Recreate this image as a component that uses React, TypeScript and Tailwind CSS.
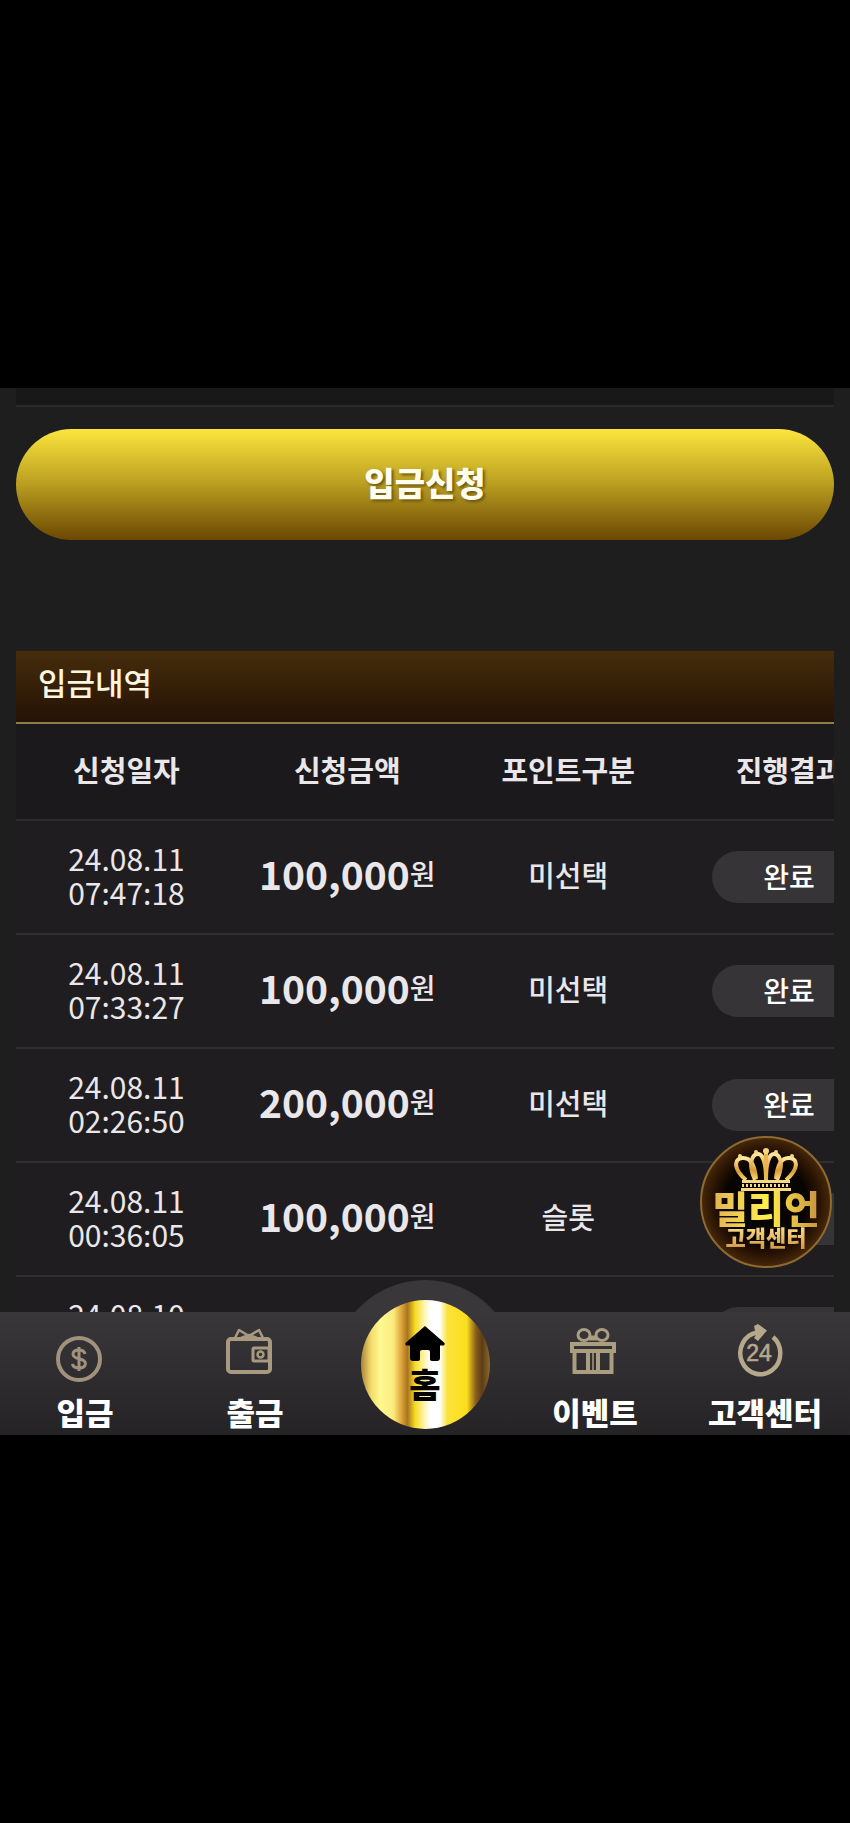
import type { ReactNode } from 'react';

interface Deposit {
  id: number;
  date: string;
  time?: string;
  amount?: string;
  point?: string;
  status?: string;
}

const deposits: Deposit[] = [
  { id: 5, date: '24.08.11', time: '07:47:18', amount: '100,000', point: '미선택', status: '완료' },
  { id: 4, date: '24.08.11', time: '07:33:27', amount: '100,000', point: '미선택', status: '완료' },
  { id: 3, date: '24.08.11', time: '02:26:50', amount: '200,000', point: '미선택', status: '완료' },
  { id: 2, date: '24.08.11', time: '00:36:05', amount: '100,000', point: '슬롯' },
  { id: 1, date: '24.08.10' },
];

const columns = ['신청일자', '신청금액', '포인트구분', '진행결과'];

function CoinIcon() {
  return (
    <svg className="mt-4" width="48" height="48" viewBox="0 0 48 48" fill="none" stroke="#a0927c" aria-hidden="true">
      <circle cx="24" cy="24" r="21" strokeWidth="4" />
      <path
        d="M30 19c-.6-2.600-2.800-3.900-6-3.900-3.600 0-6 1.500-6 4.200 0 6 12.400 3 12.400 9.200 0 3-2.600 4.500-6.400 4.500-3.700 0-6-1.500-6.600-4.100M24 12v24"
        strokeWidth="3"
      />
    </svg>
  );
}

function WalletIcon() {
  return (
    <svg width="48" height="48" viewBox="0 0 48 48" fill="none" stroke="#a89a80" strokeLinejoin="round" aria-hidden="true">
      <rect x="3" y="12" width="42" height="33" rx="3" strokeWidth="4" />
      <path d="M10 11l4-8 10 6 10-6 4 8M16 11l8-3 8 3" strokeWidth="2.500" />
      <rect x="28" y="21" width="16" height="13" rx="1" strokeWidth="3" />
      <circle cx="35.500" cy="27.500" r="3" strokeWidth="2.500" />
    </svg>
  );
}

function GiftIcon() {
  return (
    <svg className="ml-2" width="48" height="48" viewBox="0 0 48 48" fill="none" stroke="#aa9d80" aria-hidden="true">
      <ellipse cx="15" cy="8" rx="6" ry="5.500" strokeWidth="3" />
      <ellipse cx="33" cy="8" rx="6" ry="5.500" strokeWidth="3" />
      <path d="M20 11h8" strokeWidth="5" />
      <rect x="3" y="17" width="42" height="7" strokeWidth="4" />
      <path d="M5.500 25v20h37V25M19 25v20M29 25v20" strokeWidth="4" />
      <path d="M24 25v20" strokeWidth="1.500" />
    </svg>
  );
}

function SupportIcon() {
  return (
    <svg width="48" height="54" viewBox="0 0 48 54" fill="none" aria-hidden="true">
      <path d="M38 13A20 21 0 1 1 22 8.500" stroke="#b6a88a" strokeWidth="4.500" />
      <path d="M19 2l4-2 9 6.500L23 17l-4-3 2-3z" fill="#b6a88a" />
      <text
        x="24"
        y="37"
        textAnchor="middle"
        fontSize="23"
        fill="#b6a88a"
        stroke="#b6a88a"
        strokeWidth="0.600"
        fontFamily="Liberation Sans, sans-serif"
      >
        24
      </text>
    </svg>
  );
}

function HomeIcon() {
  return (
    <svg width="40" height="36" viewBox="0 0 40 36" aria-hidden="true">
      <path d="M20 0L39 16.500c1.500 1.400.6 3-1 3H35V32c0 2-1 3-3 3h-5c-1.500 0-2-.8-2-2v-7c0-1.300-.7-2-2-2h-6c-1.300 0-2 .7-2 2v7c0 1.200-.5 2-2 2H8c-2 0-3-1-3-3V19.500H2c-1.600 0-2.500-1.600-1-3z" />
    </svg>
  );
}

function Crown() {
  return (
    <svg width="64" height="44" viewBox="0 0 64 44" fill="none" aria-hidden="true">
      <defs>
        <linearGradient id="crown" x1="0" y1="0" x2="0" y2="1">
          <stop offset="0" stopColor="#ffe9a0" />
          <stop offset="0.6" stopColor="#d79a35" />
          <stop offset="1" stopColor="#f6d97a" />
        </linearGradient>
      </defs>
      <g stroke="url(#crown)" strokeWidth="4">
        <path d="M12 33C-1 22 0 12 8 11c9-1 13 8 14 21" />
        <path d="M52 33C65 22 64 12 56 11c-9-1-13 8-14 21" />
        <path d="M21 33C13 15 19 7 24 7c5 0 8 10 8 26C32 17 35 7 40 7c5 0 11 8 3 26" />
      </g>
      <path d="M32 4v29" stroke="#e9b64e" strokeWidth="4" />
      <g fill="#f8d982">
        <circle cx="6" cy="9" r="2" />
        <circle cx="22" cy="5" r="2" />
        <circle cx="32" cy="4" r="3" />
        <circle cx="42" cy="5" r="2" />
        <circle cx="58" cy="9" r="2" />
        <rect x="8" y="33" width="48" height="3" />
        <rect x="7" y="41" width="50" height="3" />
      </g>
      <path d="M8 38.500h48" stroke="#f8d982" strokeWidth="3" strokeDasharray="2 2" />
    </svg>
  );
}

function NavItem({ icon, label }: { icon: ReactNode; label: string }) {
  return (
    <a href="#" className="flex flex-col items-center">
      <span className="flex h-[77px] items-center pr-3">{icon}</span>
      <span className="text-[31px] leading-[46px] font-black whitespace-nowrap text-white">{label}</span>
    </a>
  );
}

function BottomNav() {
  return (
    <nav className="relative -mt-[79px] bg-linear-to-b from-[#39373a] to-[#252326]">
      <div className="absolute bottom-full left-1/2 h-8 w-[184px] -translate-x-1/2 overflow-hidden">
        <div className="h-[184px] rounded-full bg-[#39373a]" />
      </div>
      <div className="relative grid grid-cols-5 grid-rows-[123px]">
        <NavItem icon={<CoinIcon />} label="입금" />
        <NavItem icon={<WalletIcon />} label="출금" />
        <div className="flex justify-center self-end pb-[6px]">
          <a
            href="#"
            className="flex h-[129px] w-[129px] shrink-0 flex-col items-center rounded-full bg-[linear-gradient(90deg,#a8863a_0%,#f5dc6c_8%,#fdf890_15%,#fbec80_25%,#e0a83c_31%,#a87420_36%,#f8dc20_42%,#fff4b0_49%,#ffffff_54%,#ffffff_61%,#fbe23a_67%,#fbdf1c_82%,#8a5c1c_89%,#5c3d16_94%,#8a6a2c_100%)] pt-[26px] text-black"
          >
            <HomeIcon />
            <span className="text-[34px] leading-[44px] font-black">홈</span>
          </a>
        </div>
        <NavItem icon={<GiftIcon />} label="이벤트" />
        <NavItem icon={<SupportIcon />} label="고객센터" />
      </div>
    </nav>
  );
}

function SupportBadge() {
  return (
    <a
      href="#"
      className="absolute right-[18px] bottom-[167px] flex h-[132px] w-[132px] flex-col items-center rounded-full border-2 border-[#8f6a2e] bg-[radial-gradient(circle,#080402_45%,#2c1504_60%,#8a5a18_100%)] pt-[9px]"
    >
      <Crown />
      <span className="-mt-1 bg-linear-to-r from-[#e2b055] via-[#fff04a] to-[#c9923f] bg-clip-text text-[39px] leading-[40px] font-black whitespace-nowrap text-transparent">
        밀리언
      </span>
      <span className="-mt-1 bg-linear-to-b from-[#ffe79a] to-[#d49a3c] bg-clip-text text-[22px] leading-[26px] font-black whitespace-nowrap text-transparent">
        고객센터
      </span>
    </a>
  );
}

function DepositTable() {
  return (
    <section className="overflow-hidden">
      <h2 className="border-b-2 border-[#8c7c4c] bg-linear-to-b from-[#452d0b] to-[#261205] px-[22px] pt-[9px] pb-[18px] text-[31px] leading-[44px] font-medium text-[#fdf6df]">
        입금내역
      </h2>
      <table className="w-[108%] table-fixed border-collapse text-center text-[#eae7ea]">
        <thead>
          <tr className="h-[96px] border-b-2 border-[#2d2c2f] bg-[#1b191c]">
            {columns.map((column) => (
              <th key={column} className="pb-1 text-[29px] font-bold whitespace-nowrap">
                {column}
              </th>
            ))}
          </tr>
        </thead>
        <tbody>
          {deposits.map((deposit) => (
            <tr key={deposit.id} className="h-[114px] border-b-2 border-[#2f2e31] bg-[#1f1d20]">
              <td className="pb-1 text-[30px] leading-[34px]">
                <span className="block h-[34px]">{deposit.date}</span>
                <span className="block h-[34px]">{deposit.time}</span>
              </td>
              <td className="pb-2 font-bold whitespace-nowrap">
                {deposit.amount && (
                  <span className="flex items-center justify-center text-[39px] leading-[44px]">
                    {deposit.amount}
                    <span className="text-[28px] font-medium">원</span>
                  </span>
                )}
              </td>
              <td className="pb-1 text-[29px] font-medium">{deposit.point}</td>
              <td>
                <span className="mx-auto block h-[52px] w-[154px] rounded-full bg-[#363437] text-[28px] leading-[50px] font-medium text-white">
                  {deposit.status}
                </span>
              </td>
            </tr>
          ))}
        </tbody>
      </table>
    </section>
  );
}

export default function App() {
  return (
    <div className="flex min-h-screen flex-col justify-center bg-black font-['Noto_Sans_CJK_KR',sans-serif]">
      <main className="relative overflow-hidden bg-[#1f1e1f]">
        <div className="px-4">
          <div className="h-[19px] border-b-2 border-[#2b2a2b] bg-[#181818]" />
          <button
            type="button"
            className="mt-[22px] mb-[111px] block w-full rounded-full bg-linear-to-b from-[#fde63e] via-[#b99e20] to-[#6c4804] pb-1 text-[33px] leading-[107px] font-black text-[#fffdee] [text-shadow:2px_2px_3px_#6b5610]"
          >
            입금신청
          </button>
          <DepositTable />
        </div>
        <BottomNav />
        <SupportBadge />
      </main>
    </div>
  );
}
